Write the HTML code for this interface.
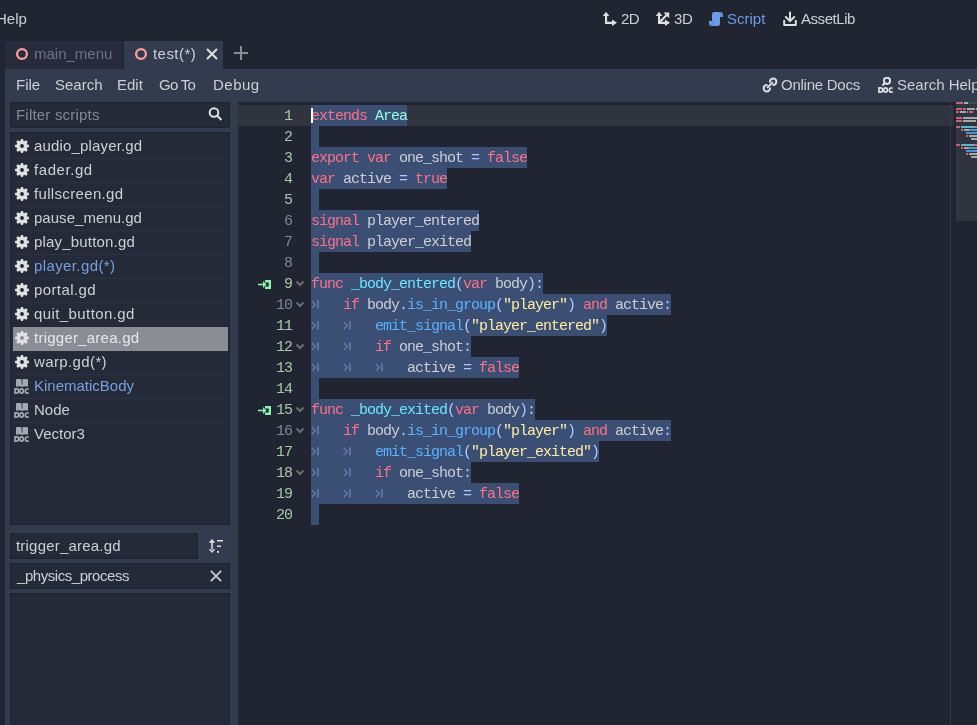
<!DOCTYPE html>
<html><head><meta charset="utf-8">
<style>
*{margin:0;padding:0;box-sizing:border-box}
html,body{width:977px;height:725px;overflow:hidden;background:#202531;font-family:"Liberation Sans",sans-serif;font-size:15px;line-height:18px;color:#cdcfd2}
.a{position:absolute;white-space:pre}
.tab{top:41px;height:28px}
.le{background:#252a39;box-shadow:inset 0 0 0 1px #1f232d}
.mono{font-family:"Liberation Mono",monospace;font-size:15px;letter-spacing:-1px;line-height:21px}
.sel{height:21px;background:#3b4e74}
.ln{left:250px;width:42px;text-align:right;letter-spacing:-1px}
.dim{color:#868993}
</style></head><body><div id="root" style="position:absolute;left:0;top:0;width:977px;height:725px;will-change:transform;overflow:hidden">
<svg width="0" height="0" style="position:absolute">
<defs>
<g id="gear"><path fill="#e0e0e0" fill-rule="evenodd" d="M6.20 3.23L7.08 0.96L8.92 0.96L9.80 3.23A5.1 5.1 0 0 1 10.10 3.35L10.10 3.35L12.33 2.37L13.63 3.67L12.65 5.90A5.1 5.1 0 0 1 12.77 6.20L12.77 6.20L15.04 7.08L15.04 8.92L12.77 9.80A5.1 5.1 0 0 1 12.65 10.10L12.65 10.10L13.63 12.33L12.33 13.63L10.10 12.65A5.1 5.1 0 0 1 9.80 12.77L9.80 12.77L8.92 15.04L7.08 15.04L6.20 12.77A5.1 5.1 0 0 1 5.90 12.65L5.90 12.65L3.67 13.63L2.37 12.33L3.35 10.10A5.1 5.1 0 0 1 3.23 9.80L3.23 9.80L0.96 8.92L0.96 7.08L3.23 6.20A5.1 5.1 0 0 1 3.35 5.90L3.35 5.90L2.37 3.67L3.67 2.37L5.90 3.35A5.1 5.1 0 0 1 6.20 3.23Z M8 6.05 A1.95 1.95 0 1 0 8 9.95 A1.95 1.95 0 1 0 8 6.05Z"/></g>
<g id="doct"><path d="M1 10.9 H2.6 A2 2.15 0 0 1 2.6 15.2 H1 Z" fill="none" stroke="currentColor" stroke-width="1.7"/><ellipse cx="7.6" cy="13.05" rx="1.75" ry="2.1" fill="none" stroke="currentColor" stroke-width="1.7"/><path d="M14.8 11 H13.2 A1.9 2.05 0 0 0 13.2 15.1 H14.8" fill="none" stroke="currentColor" stroke-width="1.7"/></g>
<g id="doc" color="#a5a8b0"><path fill="#a5a8b0" d="M2 2.3 Q2 1 3.3 1 H6.5 Q7.6 1 7.6 2.3 V6.5 H8.4 V2.3 Q8.4 1 9.7 1 H12.7 Q14 1 14 2.3 V8.7 Q11.5 7.6 8 8.7 Q4.5 7.6 2 8.7 Z"/><use href="#doct"/></g>
</defs></svg>

<!-- top bar -->
<div class="a" style="left:0;top:0;width:977px;height:41px;background:#202531"></div>
<div class="a" style="left:-4px;top:10px">Help</div>

<svg class="a" style="left:602px;top:10px" width="16" height="17" viewBox="0 0 16 17"><path fill="#e0e0e0" d="M3 5h2.1v8.9H3z M0.8 6.1L4.05 1.8L7.3 6.1z M3 11.8h7.5v2.1H3z M10 9.6L15 12.85L10 16.1z"/></svg>
<div class="a" style="left:621px;top:10px;letter-spacing:-0.6px">2D</div>
<svg class="a" style="left:655px;top:10px" width="16" height="17" viewBox="0 0 16 17"><path fill="#e0e0e0" d="M3 5h2.1v8.9H3z M0.8 6.1L4.05 1.8L7.3 6.1z M3 11.8h7.5v2.1H3z M10 9.6L15 12.85L10 16.1z M8.5 2.6H14.2V8.3z"/><path d="M4.6 12.2L11.5 5.3" stroke="#e0e0e0" stroke-width="2.1"/></svg>
<div class="a" style="left:674px;top:10px;letter-spacing:-0.4px">3D</div>
<svg class="a" style="left:708px;top:11px" width="16" height="16" viewBox="0 0 16 16"><path fill="#699ce8" d="M6.5 1 H12.5 A2.5 2.5 0 0 1 15 3.5 V6 H12 V12.5 A2.5 2.5 0 0 1 9.5 15 H3.5 A2.5 2.5 0 0 1 1 12.5 V10 H4 V3.5 A2.5 2.5 0 0 1 6.5 1 Z"/><path d="M11.5 1.5 A2 2 0 0 1 12 5.5 M4.5 10.5 V12.5 A1.5 1.5 0 0 1 2 13.5" fill="none" stroke="#4c7cc4" stroke-width="1"/></svg>
<div class="a" style="left:727px;top:10px;color:#699ce8">Script</div>
<svg class="a" style="left:782px;top:11px" width="16" height="16" viewBox="0 0 16 16"><path d="M8 1.5v8.5 M3.8 6l4.2 4.2 4.2-4.2" fill="none" stroke="#e0e0e0" stroke-width="2" stroke-linecap="round"/><path d="M2.2 9v5h11.6V9" fill="none" stroke="#e0e0e0" stroke-width="2" stroke-linejoin="round"/></svg>
<div class="a" style="left:801px;top:10px;letter-spacing:-0.45px">AssetLib</div>

<!-- tabs -->
<div class="a tab" style="left:5px;width:117px;background:#262c3b"></div>
<div class="a tab" style="left:124px;width:99px;background:#333b4f"></div>
<svg class="a" style="left:15px;top:47px" width="14" height="14"><circle cx="7" cy="7" r="4.9" fill="none" stroke="#ff9d9d" stroke-width="2.3"/></svg>
<div class="a" style="left:34px;top:45px;color:#70737d">main_menu</div>
<svg class="a" style="left:134px;top:47px" width="14" height="14"><circle cx="7" cy="7" r="4.9" fill="none" stroke="#ff9d9d" stroke-width="2.3"/></svg>
<div class="a" style="left:153px;top:45px;letter-spacing:0.45px">test(*)</div>
<svg class="a" style="left:205px;top:47px" width="14" height="14" viewBox="0 0 14 14"><path d="M2 2l10 10 M12 2l-10 10" stroke="#e0e0e0" stroke-width="2"/></svg>
<svg class="a" style="left:233px;top:45px" width="16" height="16" viewBox="0 0 16 16"><path d="M8 1v14 M1 8h14" stroke="#8c8d90" stroke-width="2"/></svg>

<!-- panel -->
<div class="a" style="left:5px;top:69px;width:972px;height:656px;background:#333b4f"></div>
<div class="a" style="left:16px;top:76px">File</div>
<div class="a" style="left:55px;top:76px">Search</div>
<div class="a" style="left:117px;top:76px">Edit</div>
<div class="a" style="left:159px;top:76px;letter-spacing:-0.7px">Go To</div>
<div class="a" style="left:213px;top:76px;letter-spacing:0.5px">Debug</div>

<svg class="a" style="left:762px;top:77px" width="16" height="16" viewBox="0 0 16 16"><path d="M4.8 8 A3.2 3.2 0 1 0 8 11.2 M11.2 8 A3.2 3.2 0 1 0 8 4.8 M5.6 10.4 L10.4 5.6" fill="none" stroke="#e0e0e0" stroke-width="2" stroke-linecap="round"/></svg>
<div class="a" style="left:781px;top:76px;letter-spacing:-0.25px">Online Docs</div>
<svg class="a" style="left:878px;top:77px;color:#e0e0e0" width="16" height="17" viewBox="0 0 16 17"><circle cx="9" cy="3.8" r="3.1" fill="none" stroke="#e0e0e0" stroke-width="2"/><path d="M6.9 6 L4.4 8.5" stroke="#e0e0e0" stroke-width="2"/><use href="#doct"/></svg>
<div class="a" style="left:897px;top:76px">Search Help</div>

<!-- filter -->
<div class="a le" style="left:10px;top:102px;width:220px;height:26px"></div>
<div class="a dim" style="left:16px;top:106px;letter-spacing:0.2px">Filter scripts</div>
<svg class="a" style="left:207px;top:106px" width="16" height="16" viewBox="0 0 16 16"><circle cx="7" cy="6.5" r="4.3" fill="none" stroke="#e0e0e0" stroke-width="2"/><path d="M10 9.5l4.5 4.5" stroke="#e0e0e0" stroke-width="2"/></svg>

<!-- file list -->
<div class="a le" style="left:10px;top:132px;width:220px;height:393px"></div>
<div class="a" style="left:14px;top:158px;width:208px;height:1px;background:#2d3342"></div>
<svg class="a" style="left:14px;top:138px" width="16" height="16"><use href="#gear"/></svg>
<div class="a" style="left:34px;top:137px;color:#cdcfd2;letter-spacing:0.16px">audio_player.gd</div>
<div class="a" style="left:14px;top:182px;width:208px;height:1px;background:#2d3342"></div>
<svg class="a" style="left:14px;top:162px" width="16" height="16"><use href="#gear"/></svg>
<div class="a" style="left:34px;top:161px;color:#cdcfd2;letter-spacing:0.56px">fader.gd</div>
<div class="a" style="left:14px;top:206px;width:208px;height:1px;background:#2d3342"></div>
<svg class="a" style="left:14px;top:186px" width="16" height="16"><use href="#gear"/></svg>
<div class="a" style="left:34px;top:185px;color:#cdcfd2;letter-spacing:0.34px">fullscreen.gd</div>
<div class="a" style="left:14px;top:230px;width:208px;height:1px;background:#2d3342"></div>
<svg class="a" style="left:14px;top:210px" width="16" height="16"><use href="#gear"/></svg>
<div class="a" style="left:34px;top:209px;color:#cdcfd2;letter-spacing:0.03px">pause_menu.gd</div>
<div class="a" style="left:14px;top:254px;width:208px;height:1px;background:#2d3342"></div>
<svg class="a" style="left:14px;top:234px" width="16" height="16"><use href="#gear"/></svg>
<div class="a" style="left:34px;top:233px;color:#cdcfd2;letter-spacing:0.18px">play_button.gd</div>
<div class="a" style="left:14px;top:278px;width:208px;height:1px;background:#2d3342"></div>
<svg class="a" style="left:14px;top:258px" width="16" height="16"><use href="#gear"/></svg>
<div class="a" style="left:34px;top:257px;color:#74a0e0;letter-spacing:0.39px">player.gd(*)</div>
<div class="a" style="left:14px;top:302px;width:208px;height:1px;background:#2d3342"></div>
<svg class="a" style="left:14px;top:282px" width="16" height="16"><use href="#gear"/></svg>
<div class="a" style="left:34px;top:281px;color:#cdcfd2;letter-spacing:0.39px">portal.gd</div>
<svg class="a" style="left:14px;top:306px" width="16" height="16"><use href="#gear"/></svg>
<div class="a" style="left:34px;top:305px;color:#cdcfd2;letter-spacing:0.41px">quit_button.gd</div>
<div class="a" style="left:13px;top:327px;width:215px;height:24px;background:#8a8d94"></div>
<svg class="a" style="left:14px;top:330px" width="16" height="16"><use href="#gear"/></svg>
<div class="a" style="left:34px;top:329px;color:#e6e7ea;letter-spacing:0.24px">trigger_area.gd</div>
<div class="a" style="left:14px;top:374px;width:208px;height:1px;background:#2d3342"></div>
<svg class="a" style="left:14px;top:354px" width="16" height="16"><use href="#gear"/></svg>
<div class="a" style="left:34px;top:353px;color:#cdcfd2;letter-spacing:0.38px">warp.gd(*)</div>
<div class="a" style="left:14px;top:398px;width:208px;height:1px;background:#2d3342"></div>
<svg class="a" style="left:14px;top:378px" width="16" height="16"><use href="#doc"/></svg>
<div class="a" style="left:34px;top:377px;color:#74a0e0;letter-spacing:0px">KinematicBody</div>
<div class="a" style="left:14px;top:422px;width:208px;height:1px;background:#2d3342"></div>
<svg class="a" style="left:14px;top:402px" width="16" height="16"><use href="#doc"/></svg>
<div class="a" style="left:34px;top:401px;color:#cdcfd2;letter-spacing:0px">Node</div>
<svg class="a" style="left:14px;top:426px" width="16" height="16"><use href="#doc"/></svg>
<div class="a" style="left:34px;top:425px;color:#cdcfd2;letter-spacing:0px">Vector3</div>

<!-- bottom left -->
<div class="a le" style="left:10px;top:533px;width:188px;height:26px"></div>
<div class="a" style="left:16px;top:537px;letter-spacing:0.2px">trigger_area.gd</div>
<svg class="a" style="left:207px;top:537px" width="18" height="18" viewBox="0 0 18 18"><path fill="#e0e0e0" d="M4.2 4.5h1.6v9h-1.6z M1.7 5.8 L5 2 L8.3 5.8z M1.7 12.2 L5 16 L8.3 12.2z M10 2.9h6v1.7h-6z M10 8.4h4v1.7h-4z M10 14h2v1.8h-2z"/></svg>
<div class="a le" style="left:10px;top:563px;width:220px;height:26px"></div>
<div class="a" style="left:17px;top:567px;letter-spacing:-0.45px">_physics_process</div>
<svg class="a" style="left:209px;top:569px" width="14" height="14" viewBox="0 0 14 14"><path d="M1.8 1.8l10.4 10.4 M12.2 1.8l-10.4 10.4" stroke="#c8cacf" stroke-width="1.9"/></svg>
<div class="a le" style="left:10px;top:593px;width:220px;height:140px"></div>

<!-- code editor -->
<div class="a" style="left:238px;top:102px;width:739px;height:623px;background:#202531"></div>
<div class="a" style="left:238px;top:105px;width:716px;height:21px;background:#30343f"></div>
<div class="a sel" style="left:311px;top:105px;width:96px"></div>
<div class="a sel" style="left:311px;top:126px;width:8px"></div>
<div class="a sel" style="left:311px;top:147px;width:216px"></div>
<div class="a sel" style="left:311px;top:168px;width:136px"></div>
<div class="a sel" style="left:311px;top:189px;width:8px"></div>
<div class="a sel" style="left:311px;top:210px;width:168px"></div>
<div class="a sel" style="left:311px;top:231px;width:160px"></div>
<div class="a sel" style="left:311px;top:252px;width:8px"></div>
<div class="a sel" style="left:311px;top:273px;width:232px"></div>
<div class="a sel" style="left:311px;top:294px;width:360px"></div>
<div class="a sel" style="left:311px;top:315px;width:296px"></div>
<div class="a sel" style="left:311px;top:336px;width:160px"></div>
<div class="a sel" style="left:311px;top:357px;width:208px"></div>
<div class="a sel" style="left:311px;top:378px;width:8px"></div>
<div class="a sel" style="left:311px;top:399px;width:224px"></div>
<div class="a sel" style="left:311px;top:420px;width:360px"></div>
<div class="a sel" style="left:311px;top:441px;width:288px"></div>
<div class="a sel" style="left:311px;top:462px;width:160px"></div>
<div class="a sel" style="left:311px;top:483px;width:208px"></div>
<div class="a sel" style="left:311px;top:504px;width:8px"></div>
<div class="a mono ln" style="top:106px;color:#a6c8a6">1</div>
<div class="a mono ln" style="top:127px;color:#a6c8a6">2</div>
<div class="a mono ln" style="top:148px;color:#a6c8a6">3</div>
<div class="a mono ln" style="top:169px;color:#a6c8a6">4</div>
<div class="a mono ln" style="top:190px;color:#a6c8a6">5</div>
<div class="a mono ln" style="top:211px;color:#85868d">6</div>
<div class="a mono ln" style="top:232px;color:#85868d">7</div>
<div class="a mono ln" style="top:253px;color:#85868d">8</div>
<div class="a mono ln" style="top:274px;color:#a6c8a6">9</div>
<svg class="a" style="left:295px;top:280px" width="10" height="7" viewBox="0 0 10 7"><path d="M1.5 1.5 L5 5 L8.5 1.5" fill="none" stroke="#6b6d75" stroke-width="2"/></svg>
<svg class="a" style="left:257px;top:279px" width="16" height="11" viewBox="0 0 16 11"><path d="M1 5.5 H7" stroke="#86f5ad" stroke-width="1.6"/><path d="M6 2 L9.6 5.5 L6 9 Z" fill="#86f5ad"/><path d="M8 1 H14 V10 H8 V7.5 H11.7 V3.5 H8 Z" fill="#86f5ad"/></svg>
<div class="a mono ln" style="top:295px;color:#85868d">10</div>
<svg class="a" style="left:295px;top:301px" width="10" height="7" viewBox="0 0 10 7"><path d="M1.5 1.5 L5 5 L8.5 1.5" fill="none" stroke="#6b6d75" stroke-width="2"/></svg>
<div class="a mono ln" style="top:316px;color:#a6c8a6">11</div>
<div class="a mono ln" style="top:337px;color:#a6c8a6">12</div>
<svg class="a" style="left:295px;top:343px" width="10" height="7" viewBox="0 0 10 7"><path d="M1.5 1.5 L5 5 L8.5 1.5" fill="none" stroke="#6b6d75" stroke-width="2"/></svg>
<div class="a mono ln" style="top:358px;color:#a6c8a6">13</div>
<div class="a mono ln" style="top:379px;color:#a6c8a6">14</div>
<div class="a mono ln" style="top:400px;color:#a6c8a6">15</div>
<svg class="a" style="left:295px;top:406px" width="10" height="7" viewBox="0 0 10 7"><path d="M1.5 1.5 L5 5 L8.5 1.5" fill="none" stroke="#6b6d75" stroke-width="2"/></svg>
<svg class="a" style="left:257px;top:405px" width="16" height="11" viewBox="0 0 16 11"><path d="M1 5.5 H7" stroke="#86f5ad" stroke-width="1.6"/><path d="M6 2 L9.6 5.5 L6 9 Z" fill="#86f5ad"/><path d="M8 1 H14 V10 H8 V7.5 H11.7 V3.5 H8 Z" fill="#86f5ad"/></svg>
<div class="a mono ln" style="top:421px;color:#85868d">16</div>
<svg class="a" style="left:295px;top:427px" width="10" height="7" viewBox="0 0 10 7"><path d="M1.5 1.5 L5 5 L8.5 1.5" fill="none" stroke="#6b6d75" stroke-width="2"/></svg>
<div class="a mono ln" style="top:442px;color:#a6c8a6">17</div>
<div class="a mono ln" style="top:463px;color:#a6c8a6">18</div>
<svg class="a" style="left:295px;top:469px" width="10" height="7" viewBox="0 0 10 7"><path d="M1.5 1.5 L5 5 L8.5 1.5" fill="none" stroke="#6b6d75" stroke-width="2"/></svg>
<div class="a mono ln" style="top:484px;color:#a6c8a6">19</div>
<div class="a mono ln" style="top:505px;color:#a6c8a6">20</div>
<div class="a mono" style="left:311px;top:106px;color:#ff7085">extends</div>
<div class="a mono" style="left:375px;top:106px;color:#8effda">Area</div>
<div class="a mono" style="left:311px;top:148px;color:#ff7085">export</div>
<div class="a mono" style="left:367px;top:148px;color:#ff7085">var</div>
<div class="a mono" style="left:391px;top:148px;color:#ccced3"> one_shot </div>
<div class="a mono" style="left:471px;top:148px;color:#abc8ff">=</div>
<div class="a mono" style="left:487px;top:148px;color:#ff7085">false</div>
<div class="a mono" style="left:311px;top:169px;color:#ff7085">var</div>
<div class="a mono" style="left:335px;top:169px;color:#ccced3"> active </div>
<div class="a mono" style="left:399px;top:169px;color:#abc8ff">=</div>
<div class="a mono" style="left:415px;top:169px;color:#ff7085">true</div>
<div class="a mono" style="left:311px;top:211px;color:#ff7085">signal</div>
<div class="a mono" style="left:359px;top:211px;color:#ccced3"> player_entered</div>
<div class="a mono" style="left:311px;top:232px;color:#ff7085">signal</div>
<div class="a mono" style="left:359px;top:232px;color:#ccced3"> player_exited</div>
<div class="a mono" style="left:311px;top:274px;color:#ff7085">func</div>
<div class="a mono" style="left:351px;top:274px;color:#66e6ff">_body_entered</div>
<div class="a mono" style="left:455px;top:274px;color:#abc8ff">(</div>
<div class="a mono" style="left:463px;top:274px;color:#ff7085">var</div>
<div class="a mono" style="left:487px;top:274px;color:#ccced3"> body</div>
<div class="a mono" style="left:527px;top:274px;color:#abc8ff">):</div>
<svg class="a" style="left:311px;top:300px" width="9" height="9" viewBox="0 0 9 9"><path d="M0.6 0.8 L4.4 4.5 L0.6 8.2" fill="none" stroke="#5a73a0" stroke-width="1.8"/><path d="M7 0 V8.5" stroke="#5a73a0" stroke-width="2"/></svg>
<div class="a mono" style="left:343px;top:295px;color:#ff7085">if</div>
<div class="a mono" style="left:359px;top:295px;color:#ccced3"> body</div>
<div class="a mono" style="left:399px;top:295px;color:#abc8ff">.</div>
<div class="a mono" style="left:407px;top:295px;color:#57b3ff">is_in_group</div>
<div class="a mono" style="left:495px;top:295px;color:#abc8ff">(</div>
<div class="a mono" style="left:503px;top:295px;color:#ffeca1">&quot;player&quot;</div>
<div class="a mono" style="left:567px;top:295px;color:#abc8ff">)</div>
<div class="a mono" style="left:583px;top:295px;color:#ff7085">and</div>
<div class="a mono" style="left:607px;top:295px;color:#ccced3"> active</div>
<div class="a mono" style="left:663px;top:295px;color:#abc8ff">:</div>
<svg class="a" style="left:311px;top:321px" width="9" height="9" viewBox="0 0 9 9"><path d="M0.6 0.8 L4.4 4.5 L0.6 8.2" fill="none" stroke="#5a73a0" stroke-width="1.8"/><path d="M7 0 V8.5" stroke="#5a73a0" stroke-width="2"/></svg>
<svg class="a" style="left:343px;top:321px" width="9" height="9" viewBox="0 0 9 9"><path d="M0.6 0.8 L4.4 4.5 L0.6 8.2" fill="none" stroke="#5a73a0" stroke-width="1.8"/><path d="M7 0 V8.5" stroke="#5a73a0" stroke-width="2"/></svg>
<div class="a mono" style="left:375px;top:316px;color:#57b3ff">emit_signal</div>
<div class="a mono" style="left:463px;top:316px;color:#abc8ff">(</div>
<div class="a mono" style="left:471px;top:316px;color:#ffeca1">&quot;player_entered&quot;</div>
<div class="a mono" style="left:599px;top:316px;color:#abc8ff">)</div>
<svg class="a" style="left:311px;top:342px" width="9" height="9" viewBox="0 0 9 9"><path d="M0.6 0.8 L4.4 4.5 L0.6 8.2" fill="none" stroke="#5a73a0" stroke-width="1.8"/><path d="M7 0 V8.5" stroke="#5a73a0" stroke-width="2"/></svg>
<svg class="a" style="left:343px;top:342px" width="9" height="9" viewBox="0 0 9 9"><path d="M0.6 0.8 L4.4 4.5 L0.6 8.2" fill="none" stroke="#5a73a0" stroke-width="1.8"/><path d="M7 0 V8.5" stroke="#5a73a0" stroke-width="2"/></svg>
<div class="a mono" style="left:375px;top:337px;color:#ff7085">if</div>
<div class="a mono" style="left:391px;top:337px;color:#ccced3"> one_shot</div>
<div class="a mono" style="left:463px;top:337px;color:#abc8ff">:</div>
<svg class="a" style="left:311px;top:363px" width="9" height="9" viewBox="0 0 9 9"><path d="M0.6 0.8 L4.4 4.5 L0.6 8.2" fill="none" stroke="#5a73a0" stroke-width="1.8"/><path d="M7 0 V8.5" stroke="#5a73a0" stroke-width="2"/></svg>
<svg class="a" style="left:343px;top:363px" width="9" height="9" viewBox="0 0 9 9"><path d="M0.6 0.8 L4.4 4.5 L0.6 8.2" fill="none" stroke="#5a73a0" stroke-width="1.8"/><path d="M7 0 V8.5" stroke="#5a73a0" stroke-width="2"/></svg>
<svg class="a" style="left:375px;top:363px" width="9" height="9" viewBox="0 0 9 9"><path d="M0.6 0.8 L4.4 4.5 L0.6 8.2" fill="none" stroke="#5a73a0" stroke-width="1.8"/><path d="M7 0 V8.5" stroke="#5a73a0" stroke-width="2"/></svg>
<div class="a mono" style="left:407px;top:358px;color:#ccced3">active </div>
<div class="a mono" style="left:463px;top:358px;color:#abc8ff">=</div>
<div class="a mono" style="left:479px;top:358px;color:#ff7085">false</div>
<div class="a mono" style="left:311px;top:400px;color:#ff7085">func</div>
<div class="a mono" style="left:351px;top:400px;color:#66e6ff">_body_exited</div>
<div class="a mono" style="left:447px;top:400px;color:#abc8ff">(</div>
<div class="a mono" style="left:455px;top:400px;color:#ff7085">var</div>
<div class="a mono" style="left:479px;top:400px;color:#ccced3"> body</div>
<div class="a mono" style="left:519px;top:400px;color:#abc8ff">):</div>
<svg class="a" style="left:311px;top:426px" width="9" height="9" viewBox="0 0 9 9"><path d="M0.6 0.8 L4.4 4.5 L0.6 8.2" fill="none" stroke="#5a73a0" stroke-width="1.8"/><path d="M7 0 V8.5" stroke="#5a73a0" stroke-width="2"/></svg>
<div class="a mono" style="left:343px;top:421px;color:#ff7085">if</div>
<div class="a mono" style="left:359px;top:421px;color:#ccced3"> body</div>
<div class="a mono" style="left:399px;top:421px;color:#abc8ff">.</div>
<div class="a mono" style="left:407px;top:421px;color:#57b3ff">is_in_group</div>
<div class="a mono" style="left:495px;top:421px;color:#abc8ff">(</div>
<div class="a mono" style="left:503px;top:421px;color:#ffeca1">&quot;player&quot;</div>
<div class="a mono" style="left:567px;top:421px;color:#abc8ff">)</div>
<div class="a mono" style="left:583px;top:421px;color:#ff7085">and</div>
<div class="a mono" style="left:607px;top:421px;color:#ccced3"> active</div>
<div class="a mono" style="left:663px;top:421px;color:#abc8ff">:</div>
<svg class="a" style="left:311px;top:447px" width="9" height="9" viewBox="0 0 9 9"><path d="M0.6 0.8 L4.4 4.5 L0.6 8.2" fill="none" stroke="#5a73a0" stroke-width="1.8"/><path d="M7 0 V8.5" stroke="#5a73a0" stroke-width="2"/></svg>
<svg class="a" style="left:343px;top:447px" width="9" height="9" viewBox="0 0 9 9"><path d="M0.6 0.8 L4.4 4.5 L0.6 8.2" fill="none" stroke="#5a73a0" stroke-width="1.8"/><path d="M7 0 V8.5" stroke="#5a73a0" stroke-width="2"/></svg>
<div class="a mono" style="left:375px;top:442px;color:#57b3ff">emit_signal</div>
<div class="a mono" style="left:463px;top:442px;color:#abc8ff">(</div>
<div class="a mono" style="left:471px;top:442px;color:#ffeca1">&quot;player_exited&quot;</div>
<div class="a mono" style="left:591px;top:442px;color:#abc8ff">)</div>
<svg class="a" style="left:311px;top:468px" width="9" height="9" viewBox="0 0 9 9"><path d="M0.6 0.8 L4.4 4.5 L0.6 8.2" fill="none" stroke="#5a73a0" stroke-width="1.8"/><path d="M7 0 V8.5" stroke="#5a73a0" stroke-width="2"/></svg>
<svg class="a" style="left:343px;top:468px" width="9" height="9" viewBox="0 0 9 9"><path d="M0.6 0.8 L4.4 4.5 L0.6 8.2" fill="none" stroke="#5a73a0" stroke-width="1.8"/><path d="M7 0 V8.5" stroke="#5a73a0" stroke-width="2"/></svg>
<div class="a mono" style="left:375px;top:463px;color:#ff7085">if</div>
<div class="a mono" style="left:391px;top:463px;color:#ccced3"> one_shot</div>
<div class="a mono" style="left:463px;top:463px;color:#abc8ff">:</div>
<svg class="a" style="left:311px;top:489px" width="9" height="9" viewBox="0 0 9 9"><path d="M0.6 0.8 L4.4 4.5 L0.6 8.2" fill="none" stroke="#5a73a0" stroke-width="1.8"/><path d="M7 0 V8.5" stroke="#5a73a0" stroke-width="2"/></svg>
<svg class="a" style="left:343px;top:489px" width="9" height="9" viewBox="0 0 9 9"><path d="M0.6 0.8 L4.4 4.5 L0.6 8.2" fill="none" stroke="#5a73a0" stroke-width="1.8"/><path d="M7 0 V8.5" stroke="#5a73a0" stroke-width="2"/></svg>
<svg class="a" style="left:375px;top:489px" width="9" height="9" viewBox="0 0 9 9"><path d="M0.6 0.8 L4.4 4.5 L0.6 8.2" fill="none" stroke="#5a73a0" stroke-width="1.8"/><path d="M7 0 V8.5" stroke="#5a73a0" stroke-width="2"/></svg>
<div class="a mono" style="left:407px;top:484px;color:#ccced3">active </div>
<div class="a mono" style="left:463px;top:484px;color:#abc8ff">=</div>
<div class="a mono" style="left:479px;top:484px;color:#ff7085">false</div>
<div class="a" style="left:950px;top:102px;width:1px;height:623px;background:#343c52"></div>
<div class="a" style="left:956px;top:102px;width:21px;height:119px;background:#30343f"></div>
<div class="a" style="left:956px;top:102px;width:7px;height:2px;background:#ff7085;opacity:.75"></div>
<div class="a" style="left:964px;top:102px;width:4px;height:2px;background:#8effda;opacity:.75"></div>
<div class="a" style="left:956px;top:108px;width:6px;height:2px;background:#ff7085;opacity:.75"></div>
<div class="a" style="left:963px;top:108px;width:3px;height:2px;background:#ff7085;opacity:.75"></div>
<div class="a" style="left:967px;top:108px;width:8px;height:2px;background:#ccced3;opacity:.75"></div>
<div class="a" style="left:976px;top:108px;width:1px;height:2px;background:#abc8ff;opacity:.75"></div>
<div class="a" style="left:978px;top:108px;width:5px;height:2px;background:#ff7085;opacity:.75"></div>
<div class="a" style="left:956px;top:111px;width:3px;height:2px;background:#ff7085;opacity:.75"></div>
<div class="a" style="left:960px;top:111px;width:6px;height:2px;background:#ccced3;opacity:.75"></div>
<div class="a" style="left:967px;top:111px;width:1px;height:2px;background:#abc8ff;opacity:.75"></div>
<div class="a" style="left:969px;top:111px;width:4px;height:2px;background:#ff7085;opacity:.75"></div>
<div class="a" style="left:956px;top:117px;width:6px;height:2px;background:#ff7085;opacity:.75"></div>
<div class="a" style="left:963px;top:117px;width:14px;height:2px;background:#ccced3;opacity:.75"></div>
<div class="a" style="left:956px;top:120px;width:6px;height:2px;background:#ff7085;opacity:.75"></div>
<div class="a" style="left:963px;top:120px;width:13px;height:2px;background:#ccced3;opacity:.75"></div>
<div class="a" style="left:956px;top:126px;width:4px;height:2px;background:#ff7085;opacity:.75"></div>
<div class="a" style="left:961px;top:126px;width:13px;height:2px;background:#66e6ff;opacity:.75"></div>
<div class="a" style="left:974px;top:126px;width:1px;height:2px;background:#abc8ff;opacity:.75"></div>
<div class="a" style="left:975px;top:126px;width:3px;height:2px;background:#ff7085;opacity:.75"></div>
<div class="a" style="left:979px;top:126px;width:4px;height:2px;background:#ccced3;opacity:.75"></div>
<div class="a" style="left:983px;top:126px;width:2px;height:2px;background:#abc8ff;opacity:.75"></div>
<div class="a" style="left:961px;top:129px;width:2px;height:2px;background:#ff7085;opacity:.75"></div>
<div class="a" style="left:964px;top:129px;width:4px;height:2px;background:#ccced3;opacity:.75"></div>
<div class="a" style="left:968px;top:129px;width:1px;height:2px;background:#abc8ff;opacity:.75"></div>
<div class="a" style="left:969px;top:129px;width:11px;height:2px;background:#57b3ff;opacity:.75"></div>
<div class="a" style="left:980px;top:129px;width:1px;height:2px;background:#abc8ff;opacity:.75"></div>
<div class="a" style="left:981px;top:129px;width:8px;height:2px;background:#ffeca1;opacity:.75"></div>
<div class="a" style="left:989px;top:129px;width:1px;height:2px;background:#abc8ff;opacity:.75"></div>
<div class="a" style="left:991px;top:129px;width:3px;height:2px;background:#ff7085;opacity:.75"></div>
<div class="a" style="left:995px;top:129px;width:6px;height:2px;background:#ccced3;opacity:.75"></div>
<div class="a" style="left:1001px;top:129px;width:1px;height:2px;background:#abc8ff;opacity:.75"></div>
<div class="a" style="left:966px;top:132px;width:11px;height:2px;background:#57b3ff;opacity:.75"></div>
<div class="a" style="left:977px;top:132px;width:1px;height:2px;background:#abc8ff;opacity:.75"></div>
<div class="a" style="left:978px;top:132px;width:16px;height:2px;background:#ffeca1;opacity:.75"></div>
<div class="a" style="left:994px;top:132px;width:1px;height:2px;background:#abc8ff;opacity:.75"></div>
<div class="a" style="left:966px;top:135px;width:2px;height:2px;background:#ff7085;opacity:.75"></div>
<div class="a" style="left:969px;top:135px;width:8px;height:2px;background:#ccced3;opacity:.75"></div>
<div class="a" style="left:977px;top:135px;width:1px;height:2px;background:#abc8ff;opacity:.75"></div>
<div class="a" style="left:971px;top:138px;width:6px;height:2px;background:#ccced3;opacity:.75"></div>
<div class="a" style="left:978px;top:138px;width:1px;height:2px;background:#abc8ff;opacity:.75"></div>
<div class="a" style="left:980px;top:138px;width:5px;height:2px;background:#ff7085;opacity:.75"></div>
<div class="a" style="left:956px;top:144px;width:4px;height:2px;background:#ff7085;opacity:.75"></div>
<div class="a" style="left:961px;top:144px;width:12px;height:2px;background:#66e6ff;opacity:.75"></div>
<div class="a" style="left:973px;top:144px;width:1px;height:2px;background:#abc8ff;opacity:.75"></div>
<div class="a" style="left:974px;top:144px;width:3px;height:2px;background:#ff7085;opacity:.75"></div>
<div class="a" style="left:978px;top:144px;width:4px;height:2px;background:#ccced3;opacity:.75"></div>
<div class="a" style="left:982px;top:144px;width:2px;height:2px;background:#abc8ff;opacity:.75"></div>
<div class="a" style="left:961px;top:147px;width:2px;height:2px;background:#ff7085;opacity:.75"></div>
<div class="a" style="left:964px;top:147px;width:4px;height:2px;background:#ccced3;opacity:.75"></div>
<div class="a" style="left:968px;top:147px;width:1px;height:2px;background:#abc8ff;opacity:.75"></div>
<div class="a" style="left:969px;top:147px;width:11px;height:2px;background:#57b3ff;opacity:.75"></div>
<div class="a" style="left:980px;top:147px;width:1px;height:2px;background:#abc8ff;opacity:.75"></div>
<div class="a" style="left:981px;top:147px;width:8px;height:2px;background:#ffeca1;opacity:.75"></div>
<div class="a" style="left:989px;top:147px;width:1px;height:2px;background:#abc8ff;opacity:.75"></div>
<div class="a" style="left:991px;top:147px;width:3px;height:2px;background:#ff7085;opacity:.75"></div>
<div class="a" style="left:995px;top:147px;width:6px;height:2px;background:#ccced3;opacity:.75"></div>
<div class="a" style="left:1001px;top:147px;width:1px;height:2px;background:#abc8ff;opacity:.75"></div>
<div class="a" style="left:966px;top:150px;width:11px;height:2px;background:#57b3ff;opacity:.75"></div>
<div class="a" style="left:977px;top:150px;width:1px;height:2px;background:#abc8ff;opacity:.75"></div>
<div class="a" style="left:978px;top:150px;width:15px;height:2px;background:#ffeca1;opacity:.75"></div>
<div class="a" style="left:993px;top:150px;width:1px;height:2px;background:#abc8ff;opacity:.75"></div>
<div class="a" style="left:966px;top:153px;width:2px;height:2px;background:#ff7085;opacity:.75"></div>
<div class="a" style="left:969px;top:153px;width:8px;height:2px;background:#ccced3;opacity:.75"></div>
<div class="a" style="left:977px;top:153px;width:1px;height:2px;background:#abc8ff;opacity:.75"></div>
<div class="a" style="left:971px;top:156px;width:6px;height:2px;background:#ccced3;opacity:.75"></div>
<div class="a" style="left:978px;top:156px;width:1px;height:2px;background:#abc8ff;opacity:.75"></div>
<div class="a" style="left:980px;top:156px;width:5px;height:2px;background:#ff7085;opacity:.75"></div>
<div class="a" style="left:968px;top:102px;width:9px;height:2px;background:#444853"></div>
<div class="a" style="left:311px;top:108px;width:2px;height:15px;background:#ffffff"></div>
</div></body></html>
